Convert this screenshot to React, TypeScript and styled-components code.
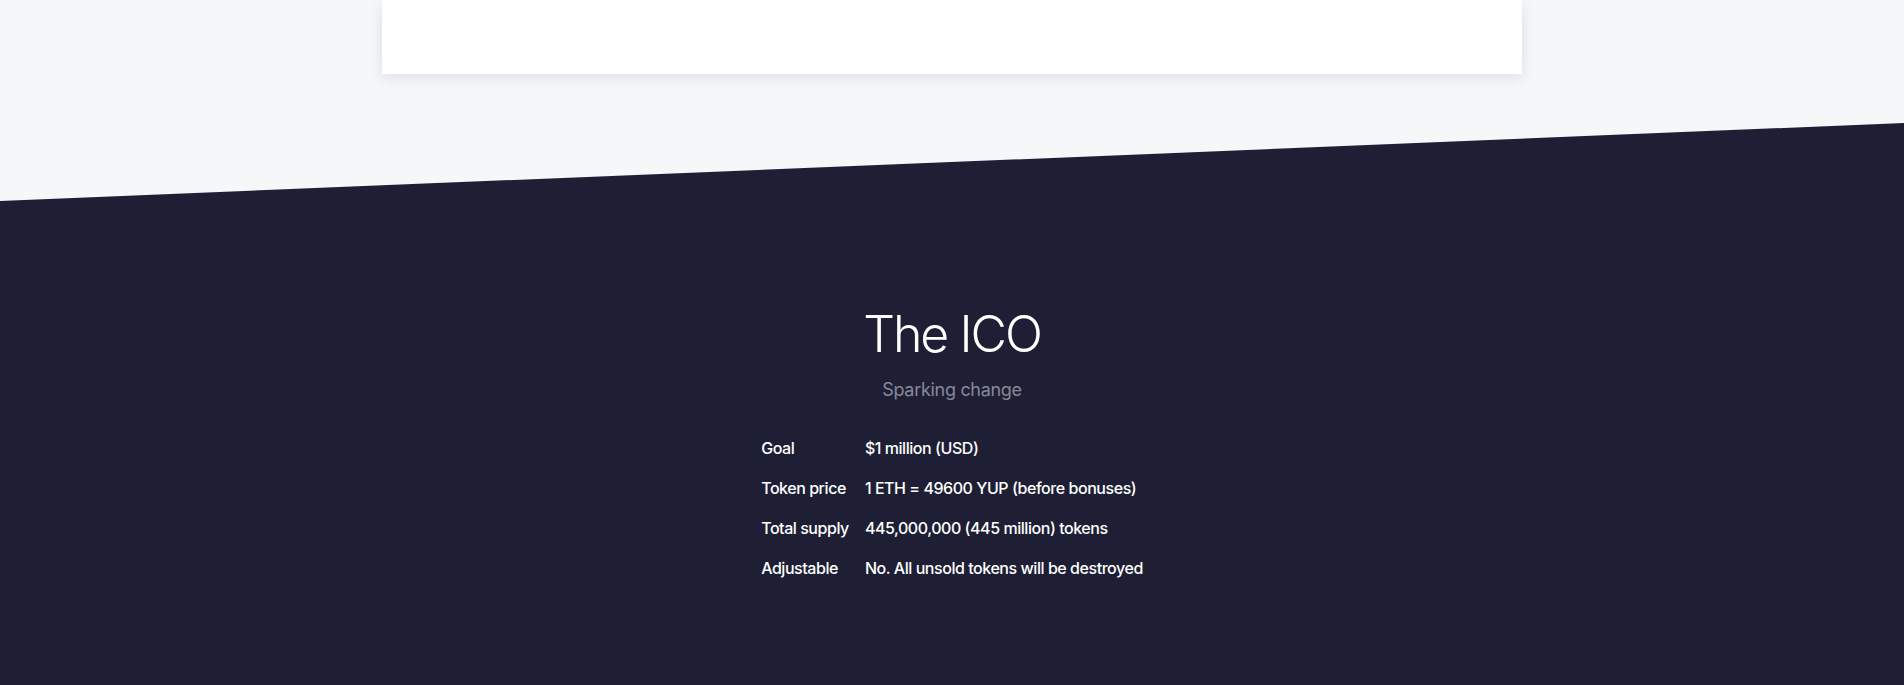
import React from "react";
import styled, { createGlobalStyle } from "styled-components";

const GlobalStyle = createGlobalStyle`
  html, body {
    margin: 0;
    padding: 0;
    background: #f6f7f9;
    font-family: Inter, "Helvetica Neue", Arial, sans-serif;
    -webkit-font-smoothing: antialiased;
  }
  * { box-sizing: border-box; }
`;

const Page = styled.div`
  width: 100%;
  min-height: 685px;
  display: flex;
  flex-direction: column;
  overflow: hidden;
`;

const TopArea = styled.div`
  display: flex;
  justify-content: center;
  padding-bottom: 49px;
`;

const Card = styled.div`
  width: 1140px;
  height: 74px;
  background: #ffffff;
  box-shadow: 0 4px 14px rgba(20, 24, 40, 0.1);
`;

const DarkSection = styled.section`
  background: #1e1f35;
  clip-path: polygon(0 78px, 100% 0, 100% 100%, 0 100%);
  padding: 181px 0 120px;
  display: flex;
  flex-direction: column;
  align-items: center;
`;

const Title = styled.h2`
  margin: 0;
  font-size: 50px;
  font-weight: 300;
  line-height: 60px;
  color: #ffffff;
  letter-spacing: -2px;
`;

const Subtitle = styled.p`
  margin: 12px 0 0;
  font-size: 18px;
  font-weight: 400;
  line-height: 28px;
  color: #878997;
  letter-spacing: -0.3px;
`;

const Table = styled.table`
  margin-top: 24px;
  border-collapse: collapse;
  color: #ffffff;
  font-size: 16px;
  font-weight: 500;
  letter-spacing: -0.45px;
`;

const Row = styled.tr``;

const Label = styled.td`
  padding: 0 16px 0 0;
  height: 40px;
  white-space: nowrap;
`;

const Value = styled.td`
  padding: 0;
  height: 40px;
  white-space: nowrap;
`;

const rows: [string, string][] = [
  ["Goal", "$1 million (USD)"],
  ["Token price", "1 ETH = 49600 YUP (before bonuses)"],
  ["Total supply", "445,000,000 (445 million) tokens"],
  ["Adjustable", "No. All unsold tokens will be destroyed"],
];

export default function App() {
  return (
    <>
      <GlobalStyle />
      <Page>
        <TopArea>
          <Card />
        </TopArea>
        <DarkSection>
          <Title>The ICO</Title>
          <Subtitle>Sparking change</Subtitle>
          <Table>
            <tbody>
              {rows.map(([k, v]) => (
                <Row key={k}>
                  <Label>{k}</Label>
                  <Value>{v}</Value>
                </Row>
              ))}
            </tbody>
          </Table>
        </DarkSection>
      </Page>
    </>
  );
}
